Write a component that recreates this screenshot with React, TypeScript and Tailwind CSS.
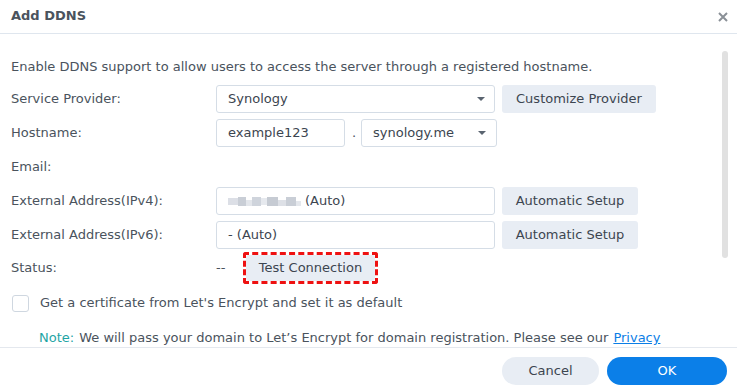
import React from "react";

function Caret() {
  return (
    <svg width="10" height="6" viewBox="0 0 10 6" className="shrink-0">
      <path d="M1 1 L9 1 L5 5 Z" fill="#5a6470" />
    </svg>
  );
}

function Row({ label, children }: { label: string; children?: React.ReactNode }) {
  return (
    <div className="flex items-center h-[28px]">
      <div className="w-[205px] shrink-0">{label}</div>
      <div className="flex items-center gap-[7px]">{children}</div>
    </div>
  );
}

function Btn({ children, w }: { children: React.ReactNode; w: string }) {
  return (
    <div className={`${w} h-[28px] rounded-[3px] bg-[#e8edf4] flex items-center justify-center text-[#3c4550]`}>
      {children}
    </div>
  );
}

export default function App() {
  return (
    <div
      className="w-[737px] h-[392px] bg-white flex flex-col text-[#4a535d] text-[13px] relative overflow-hidden"
      style={{ fontFamily: '"DejaVu Sans", Verdana, sans-serif' }}
    >
      {/* header */}
      <div className="h-[34px] shrink-0 flex items-center justify-between pl-[11px] pr-[9px] border-b border-[#dfe6ee]">
        <div className="font-bold text-[#4a535d] text-[13px] -mt-[2px]">Add DDNS</div>
        <svg width="10" height="10" viewBox="0 0 10 10">
          <path d="M1 1 L9 9 M9 1 L1 9" stroke="#8a9097" strokeWidth="2" />
        </svg>
      </div>

      {/* body */}
      <div className="flex-1 relative pl-[11px] pt-[24px] flex flex-col">
        <div className="h-[18px] flex items-center">
          Enable DDNS support to allow users to access the server through a registered hostname.
        </div>
        <div className="mt-[9px] flex flex-col gap-[6px]">
          <Row label="Service Provider:">
            <div className="w-[279px] h-[28px] rounded-[3px] border border-[#d5dde6] flex items-center justify-between pl-[11px] pr-[8px] text-[#3c4550]">
              <span>Synology</span>
              <Caret />
            </div>
            <Btn w="w-[154px]">Customize Provider</Btn>
          </Row>
          <Row label="Hostname:">
            <div className="w-[129px] h-[28px] rounded-[3px] border border-[#d5dde6] flex items-center pl-[11px] text-[#3c4550]">
              example123
            </div>
            <span className="w-[2px] text-center">.</span>
            <div className="w-[136px] h-[28px] rounded-[3px] border border-[#d5dde6] flex items-center justify-between pl-[11px] pr-[9px] text-[#3c4550]">
              <span>synology.me</span>
              <Caret />
            </div>
          </Row>
          <Row label="Email:" />
          <Row label="External Address(IPv4):">
            <div className="w-[279px] h-[28px] rounded-[3px] border border-[#d5dde6] flex items-center pl-[11px] text-[#3c4550]">
              <span className="flex items-center h-[10px] mr-[4px] blur-[0.6px]">
                <span className="w-[10px] h-[7px] bg-[#dcdfe6]" />
                <span className="w-[8px] h-[9px] bg-[#c9ced6]" />
                <span className="w-[6px] h-[6px] bg-[#e3e6eb] mt-[3px]" />
                <span className="w-[9px] h-[9px] bg-[#cfd4dc]" />
                <span className="w-[6px] h-[7px] bg-[#e6e9ee]" />
                <span className="w-[11px] h-[9px] bg-[#c6cbd3]" />
                <span className="w-[8px] h-[6px] bg-[#dde0e6] mt-[3px]" />
                <span className="w-[10px] h-[9px] bg-[#c9ced6]" />
                <span className="w-[5px] h-[5px] bg-[#e4e7ec] mt-[4px]" />
              </span>
              (Auto)
            </div>
            <Btn w="w-[136px]">Automatic Setup</Btn>
          </Row>
          <Row label="External Address(IPv6):">
            <div className="w-[279px] h-[28px] rounded-[3px] border border-[#d5dde6] flex items-center pl-[11px] text-[#3c4550]">
              - (Auto)
            </div>
            <Btn w="w-[136px]">Automatic Setup</Btn>
          </Row>
          <div className="flex items-center h-[32px] -mt-[3px]">
            <div className="w-[205px] shrink-0">Status:</div>
            <span className="w-[27px]">--</span>
            <div className="w-[135px] h-[32px] border-[3px] border-dashed border-[#ee1111] rounded-[3px] flex items-center justify-center">
              <div className="w-[129px] h-[26px] rounded-[3px] bg-[#e8edf4] flex items-center justify-center text-[#3c4550]">
                Test Connection
              </div>
            </div>
          </div>
        </div>
        <div className="mt-[10px] flex items-center h-[18px]">
          <div className="w-[17px] h-[17px] ml-[1px] rounded-[3px] border border-[#cfd7e0] mr-[11px]" />
          <span>Get a certificate from Let's Encrypt and set it as default</span>
        </div>
        <div className="mt-[17px] pl-[28px] h-[18px] flex items-center">
          <span className="text-[#1fa5a5] mr-[5px]">Note:</span>
          <span>We will pass your domain to Let’s Encrypt for domain registration. Please see our </span>
          <span className="text-[#0b7ee6] underline ml-[5px]">Privacy</span>
        </div>

        {/* scrollbar */}
        <div className="absolute right-[9px] top-[17px] w-[6px] h-[207px] rounded-[3px] bg-[#e1e1e1]" />
      </div>

      {/* footer */}
      <div className="h-[47px] shrink-0 border-t border-[#e4e8ee] bg-white flex items-center justify-end gap-[8px] pr-[10px]">
        <div className="w-[97px] h-[28px] rounded-full bg-[#e8edf4] flex items-center justify-center text-[#3c4550]">
          Cancel
        </div>
        <div className="w-[120px] h-[28px] rounded-full bg-[#0b7fe8] flex items-center justify-center text-white">
          OK
        </div>
      </div>
    </div>
  );
}
